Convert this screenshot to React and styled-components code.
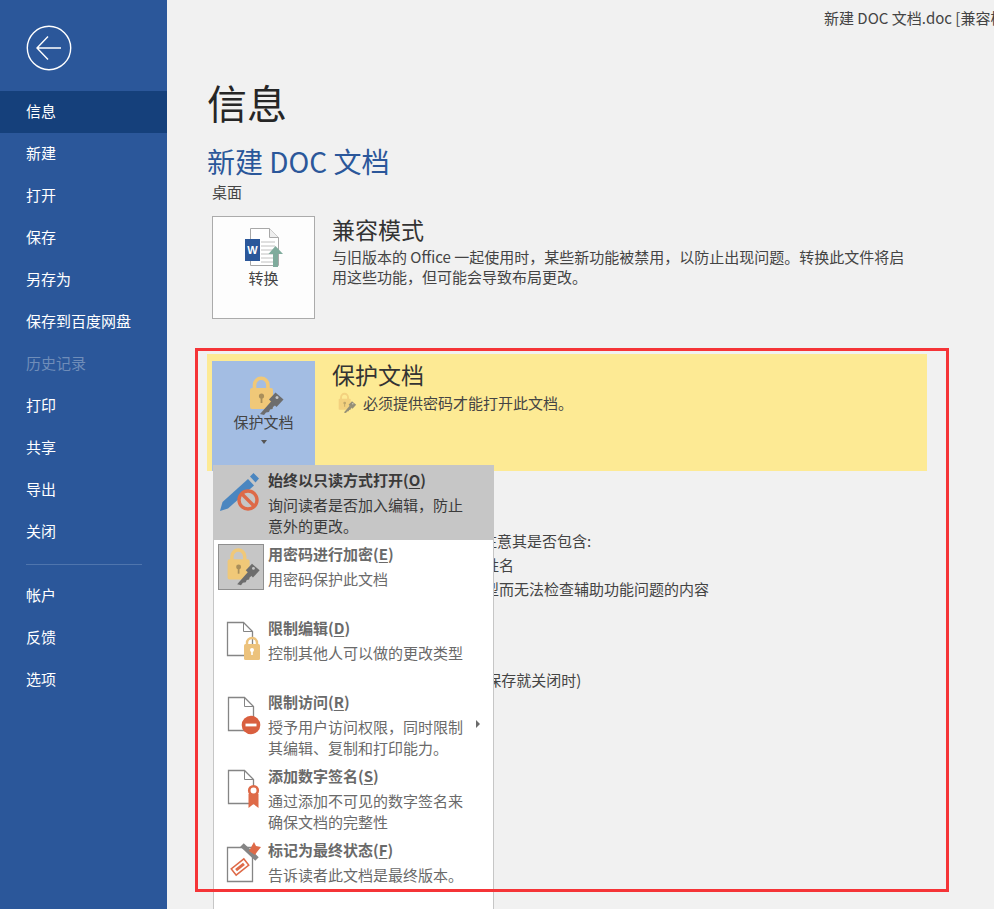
import React from "react";
import styled, { createGlobalStyle } from "styled-components";

const GlobalStyle = createGlobalStyle`
  html, body {
    margin: 0;
    padding: 0;
    background: #f1f1f1;
  }
  body {
    font-family: "Noto Sans CJK SC", "Noto Sans", sans-serif;
    color: #444;
  }
`;

const Page = styled.div`
  position: relative;
  display: flex;
  width: 994px;
  height: 909px;
  overflow: hidden;
  background: #f1f1f1;
`;

const Sidebar = styled.nav`
  flex: 0 0 167px;
  display: flex;
  flex-direction: column;
  background: #2b579a;
`;

const BackButton = styled.button`
  display: block;
  width: 46px;
  height: 46px;
  margin: 25px 0 20px 26px;
  padding: 0;
  border: none;
  background: none;
`;

const NavItem = styled.div`
  display: flex;
  align-items: center;
  box-sizing: border-box;
  height: 42px;
  padding: 0 0 4px 26px;
  font-size: 15px;
  color: ${(p) => (p.$disabled ? "#6f8db9" : "#ffffff")};
  background: ${(p) => (p.$active ? "#15407b" : "transparent")};
`;

const NavDivider = styled.div`
  width: 116px;
  height: 1px;
  margin: 11px 0 10px 26px;
  background: #4f75ad;
`;

const Main = styled.main`
  flex: 1;
  min-width: 0;
  padding-left: 40px;
`;

const WindowTitle = styled.div`
  height: 36px;
  margin-left: 617px;
  font-size: 15px;
  line-height: 36px;
  white-space: nowrap;
  overflow: hidden;
  color: #444;
`;

const PageTitle = styled.h1`
  margin: 34px 0 0;
  font-size: 40px;
  font-weight: 400;
  line-height: 64px;
  color: #262626;
`;

const DocName = styled.h2`
  margin: 9px 0 0;
  font-size: 28px;
  font-weight: 400;
  line-height: 36px;
  color: #2b579a;
`;

const DocPath = styled.div`
  margin: 2px 0 0 5px;
  font-size: 15px;
  line-height: 22px;
  color: #444;
`;

const CompatRow = styled.section`
  display: flex;
  margin: 13px 0 35px 5px;
`;

const TileButton = styled.div`
  flex: 0 0 103px;
  box-sizing: border-box;
  display: flex;
  flex-direction: column;
  align-items: center;
  height: ${(p) => (p.$active ? "110px" : "103px")};
  padding-top: ${(p) => (p.$active ? "12px" : "10px")};
  color: #444;
  background: ${(p) => (p.$active ? "#a3bde3" : "#fdfdfd")};
  border: ${(p) => (p.$active ? "none" : "1px solid #ababab")};
`;

const TileLabel = styled.span`
  margin-top: ${(p) => (p.$active ? "-7px" : "-3px")};
  font-size: 15px;
  line-height: 20px;
`;

const TileIcon = styled.svg`
  display: block;
  flex: none;
`;

const Caret = styled.div`
  width: 0;
  height: 0;
  margin-top: 8px;
  border-left: 3.5px solid transparent;
  border-right: 3.5px solid transparent;
  border-top: 4px solid #555;
`;

const SectionBody = styled.div`
  padding-left: 17px;
  width: 580px;
`;

const SectionTitle = styled.h3`
  margin: 0;
  font-size: 23px;
  font-weight: 400;
  line-height: 26px;
  color: #333;
`;

const SectionText = styled.p`
  margin: 5px 0 0;
  font-size: 15px;
  line-height: 20px;
  color: #444;
`;

const ProtectBlock = styled.section`
  position: relative;
  display: flex;
  box-sizing: border-box;
  width: 720px;
  height: 117px;
  padding: 7px 5px 0;
  background: #fdea94;
`;

const StatusLine = styled.div`
  display: flex;
  align-items: center;
  gap: 5px;
  margin: 4px 0 0 2px;
  font-size: 15px;
  line-height: 24px;
  color: #444;
`;

const InspectBody = styled.section`
  margin: 58px 0 0 125px;
`;

const InspectLine = styled.div`
  padding-left: ${(p) => (p.$bullet ? "47px" : "0")};
  font-size: 15px;
  line-height: 24px;
  white-space: nowrap;
  color: #444;
`;

const VersionLine = styled(InspectLine)`
  margin-top: 67px;
`;

const Menu = styled.div`
  position: absolute;
  top: 111px;
  left: 6px;
  box-sizing: border-box;
  width: 281px;
  padding-bottom: 40px;
  background: #ffffff;
  border: 1px solid #c6c6c6;
`;

const MenuItem = styled.div`
  position: relative;
  display: flex;
  box-sizing: border-box;
  height: 74px;
  padding: 4px 0 0 4px;
  background: ${(p) => (p.$hover ? "#c6c6c6" : "transparent")};
`;

const IconBox = styled.div`
  flex: 0 0 46px;
  box-sizing: border-box;
  width: 46px;
  height: 46px;
  background: ${(p) => (p.$boxed ? "#c6c6c6" : "transparent")};
  border: ${(p) => (p.$boxed ? "1px solid #8f8f8f" : "none")};
`;

const MenuText = styled.div`
  width: 202px;
  margin-left: 4px;
  color: ${(p) => (p.$hover ? "#3a3a3a" : "#6a6a6a")};
`;

const MenuTitle = styled.div`
  font-size: 15px;
  font-weight: 700;
  line-height: 20px;
  white-space: nowrap;
  u {
    text-underline-offset: 2px;
  }
`;

const MenuDesc = styled.div`
  margin-top: 4px;
  font-size: 15px;
  line-height: 21px;
`;

const SubArrow = styled.div`
  position: absolute;
  top: 32px;
  right: 13px;
  width: 0;
  height: 0;
  border-top: 4px solid transparent;
  border-bottom: 4px solid transparent;
  border-left: 4px solid #6a6a6a;
`;

const Annotation = styled.div`
  position: absolute;
  left: 195px;
  top: 348px;
  width: 754px;
  height: 544px;
  box-sizing: border-box;
  border: 3px solid #f53437;
  pointer-events: none;
`;

const NAV_TOP = [
  { label: "信息", active: true },
  { label: "新建" },
  { label: "打开" },
  { label: "保存" },
  { label: "另存为" },
  { label: "保存到百度网盘" },
  { label: "历史记录", disabled: true },
  { label: "打印" },
  { label: "共享" },
  { label: "导出" },
  { label: "关闭" },
];
const NAV_BOTTOM = ["帐户", "反馈", "选项"];

const COMPAT_TEXT =
  "与旧版本的 Office 一起使用时\uFF0C某些新功能被禁用\uFF0C以防止出现问题。转换此文件将启用这些功能\uFF0C但可能会导致布局更改。";
const READONLY_TEXT = "询问读者是否加入编辑\uFF0C防止意外的更改。";
const ACCESS_TEXT = "授予用户访问权限\uFF0C同时限制其编辑、复制和打印能力。";
const PUBLISH_TEXT = "在发布此文件之前\uFF0C请注意其是否包含:";

function BackIcon() {
  return (
    <svg width="46" height="46" viewBox="0 0 46 46" fill="none" stroke="#fff">
      <circle cx="23" cy="23" r="21.7" strokeWidth="1.4" />
      <path d="M11 23h24M22 11.5L11 23l11 11.5" strokeWidth="1.4" />
    </svg>
  );
}

function ConvertIcon() {
  return (
    <TileIcon width="40" height="44" viewBox="0 0 40 44">
      <path d="M6.5 1.5h19l9 9v28h-28z" fill="#fff" stroke="#a8a8a8" />
      <path d="M25.5 1.5v9h9" fill="#eee" stroke="#a8a8a8" />
      <path d="M17 15h14M17 19h14M17 23h14M17 27h14M17 31h12M17 35h12" stroke="#c0c0c0" />
      <rect x="1" y="12" width="15" height="22" fill="#2b579a" />
      <text x="8.5" y="27" textAnchor="middle" fontSize="11" fontWeight="700" fontFamily="Liberation Sans" fill="#fff">W</text>
      <path d="M29 40V27h-4.5l7-8 7.5 8h-5v13z" fill="#7fab9c" />
    </TileIcon>
  );
}

function LockKeyIcon({ size = 46, muted }) {
  return (
    <TileIcon width={size} height={size} viewBox="0 0 46 46" opacity={muted ? 0.72 : 1}>
      <path d="M13.5 16v-4a6.7 6.7 0 0 1 13.4 0v4" fill="none" stroke="#f0c878" strokeWidth="3.6" />
      <rect x="9" y="15" width="23" height="21" rx="2" fill="#f0c878" />
      <circle cx="20.5" cy="23" r="2.6" fill="#a98e5a" />
      <path d="M19.6 24h1.8v6h-1.8z" fill="#a98e5a" />
      <path d="M19 41l11.5-13 4 4-2.5 2-.5 2-2.5.5-1 2.5-3 .5-2 2.5z" fill="#6d6d6d" />
      <path d="M28 26.5l6.5-7 8 7-7 7.5z" fill="#6d6d6d" />
      <circle cx="36" cy="24.5" r="1.5" fill="#c6c6c6" />
    </TileIcon>
  );
}

function PenIcon() {
  return (
    <TileIcon width="46" height="46" viewBox="0 0 46 46">
      <path d="M2 41l2.5-9L30 9l6 6.5-26 23z" fill="#4a86c0" />
      <path d="M32 6.5l3.5-3.5 5.5 5.5-3.5 4z" fill="#4a86c0" />
      <circle cx="30" cy="30" r="9" fill="#c6c6c6" stroke="#dd6a48" strokeWidth="3.4" />
      <path d="M24 24l12 12" stroke="#dd6a48" strokeWidth="3.4" />
    </TileIcon>
  );
}

function DocOutline({ x, y, w, h }) {
  const fold = 9;
  const d = `M${x + 0.5} ${y + 0.5}h${w - fold}l${fold} ${fold}v${h - fold}h${-w}z`;
  return (
    <>
      <path d={d} fill="#fff" stroke="#858585" strokeWidth="1.3" />
      <path d={`M${x + w - fold + 0.5} ${y + 0.5}v${fold}h${fold}`} fill="none" stroke="#858585" />
    </>
  );
}

function RestrictEditIcon() {
  return (
    <TileIcon width="46" height="46" viewBox="0 0 46 46">
      <DocOutline x={9} y={4} w={25} h={33} />
      <path d="M29 27v-2a5 5 0 0 1 10 0v2" fill="none" stroke="#ecc27c" strokeWidth="2.4" />
      <rect x="26" y="26" width="16" height="16" rx="1.5" fill="#ecc27c" />
      <circle cx="34" cy="32" r="2" fill="#fff" />
      <path d="M33.2 32h1.6v5h-1.6z" fill="#fff" />
    </TileIcon>
  );
}

function RestrictAccessIcon() {
  return (
    <TileIcon width="46" height="46" viewBox="0 0 46 46">
      <DocOutline x={10} y={5} w={25} h={33} />
      <circle cx="33" cy="33" r="9.3" fill="#d95f3f" />
      <rect x="27.5" y="31.6" width="11" height="2.8" fill="#fff" />
    </TileIcon>
  );
}

function SignatureIcon() {
  return (
    <TileIcon width="46" height="46" viewBox="0 0 46 46">
      <DocOutline x={10} y={4} w={25} h={33} />
      <path d="M30.5 28h10v14l-5-4-5 4z" fill="#de6a48" />
      <circle cx="35.5" cy="24.5" r="4.3" fill="#fff" stroke="#de6a48" strokeWidth="2.6" />
    </TileIcon>
  );
}

function FinalIcon() {
  return (
    <TileIcon width="46" height="46" viewBox="0 0 46 46">
      <path d="M9.5 7.5h25v34h-25z" fill="#fff" stroke="#858585" strokeWidth="1.3" />
      <g transform="rotate(-38 22 27)">
        <rect x="14" y="23" width="16" height="8" fill="#fff" stroke="#de6a48" strokeWidth="1.5" />
        <rect x="17" y="25.5" width="10" height="3" fill="#de6a48" />
      </g>
      <path d="M24 5l15 14" stroke="#858585" strokeWidth="5" />
      <path d="M31 11l5-9 2 4 5 1-4 5-2 3z" fill="#de6a48" />
    </TileIcon>
  );
}

export default function App() {
  return (
    <Page>
      <GlobalStyle />
      <Sidebar>
        <BackButton aria-label="返回">
          <BackIcon />
        </BackButton>
        {NAV_TOP.map((item) => (
          <NavItem key={item.label} $active={item.active} $disabled={item.disabled}>
            {item.label}
          </NavItem>
        ))}
        <NavDivider />
        {NAV_BOTTOM.map((label) => (
          <NavItem key={label}>{label}</NavItem>
        ))}
      </Sidebar>

      <Main>
        <WindowTitle>新建 DOC 文档.doc [兼容模式] - Word</WindowTitle>
        <PageTitle>信息</PageTitle>
        <DocName>新建 DOC 文档</DocName>
        <DocPath>桌面</DocPath>

        <CompatRow>
          <TileButton>
            <ConvertIcon />
            <TileLabel>转换</TileLabel>
          </TileButton>
          <SectionBody>
            <SectionTitle>兼容模式</SectionTitle>
            <SectionText>{COMPAT_TEXT}</SectionText>
          </SectionBody>
        </CompatRow>

        <ProtectBlock>
          <TileButton $active>
            <LockKeyIcon />
            <TileLabel $active>保护文档</TileLabel>
            <Caret />
          </TileButton>
          <SectionBody>
            <SectionTitle>保护文档</SectionTitle>
            <StatusLine>
              <LockKeyIcon size={24} muted />
              必须提供密码才能打开此文档。
            </StatusLine>
          </SectionBody>

          <Menu>
            <MenuItem $hover>
              <IconBox><PenIcon /></IconBox>
              <MenuText $hover>
                <MenuTitle>始终以只读方式打开(<u>O</u>)</MenuTitle>
                <MenuDesc>{READONLY_TEXT}</MenuDesc>
              </MenuText>
            </MenuItem>
            <MenuItem>
              <IconBox $boxed><LockKeyIcon size={44} /></IconBox>
              <MenuText>
                <MenuTitle>用密码进行加密(<u>E</u>)</MenuTitle>
                <MenuDesc>用密码保护此文档</MenuDesc>
              </MenuText>
            </MenuItem>
            <MenuItem>
              <IconBox><RestrictEditIcon /></IconBox>
              <MenuText>
                <MenuTitle>限制编辑(<u>D</u>)</MenuTitle>
                <MenuDesc>控制其他人可以做的更改类型</MenuDesc>
              </MenuText>
            </MenuItem>
            <MenuItem>
              <IconBox><RestrictAccessIcon /></IconBox>
              <MenuText>
                <MenuTitle>限制访问(<u>R</u>)</MenuTitle>
                <MenuDesc>{ACCESS_TEXT}</MenuDesc>
              </MenuText>
              <SubArrow />
            </MenuItem>
            <MenuItem>
              <IconBox><SignatureIcon /></IconBox>
              <MenuText>
                <MenuTitle>添加数字签名(<u>S</u>)</MenuTitle>
                <MenuDesc>通过添加不可见的数字签名来确保文档的完整性</MenuDesc>
              </MenuText>
            </MenuItem>
            <MenuItem>
              <IconBox><FinalIcon /></IconBox>
              <MenuText>
                <MenuTitle>标记为最终状态(<u>F</u>)</MenuTitle>
                <MenuDesc>告诉读者此文档是最终版本。</MenuDesc>
              </MenuText>
            </MenuItem>
          </Menu>
        </ProtectBlock>

        <InspectBody>
          <InspectLine>{PUBLISH_TEXT}</InspectLine>
          <InspectLine $bullet>文档属性和作者姓名</InspectLine>
          <InspectLine $bullet>由于当前文件类型而无法检查辅助功能问题的内容</InspectLine>
          <VersionLine>今天 15:27 (当我还没有保存就关闭时)</VersionLine>
        </InspectBody>
      </Main>

      <Annotation />
    </Page>
  );
}
